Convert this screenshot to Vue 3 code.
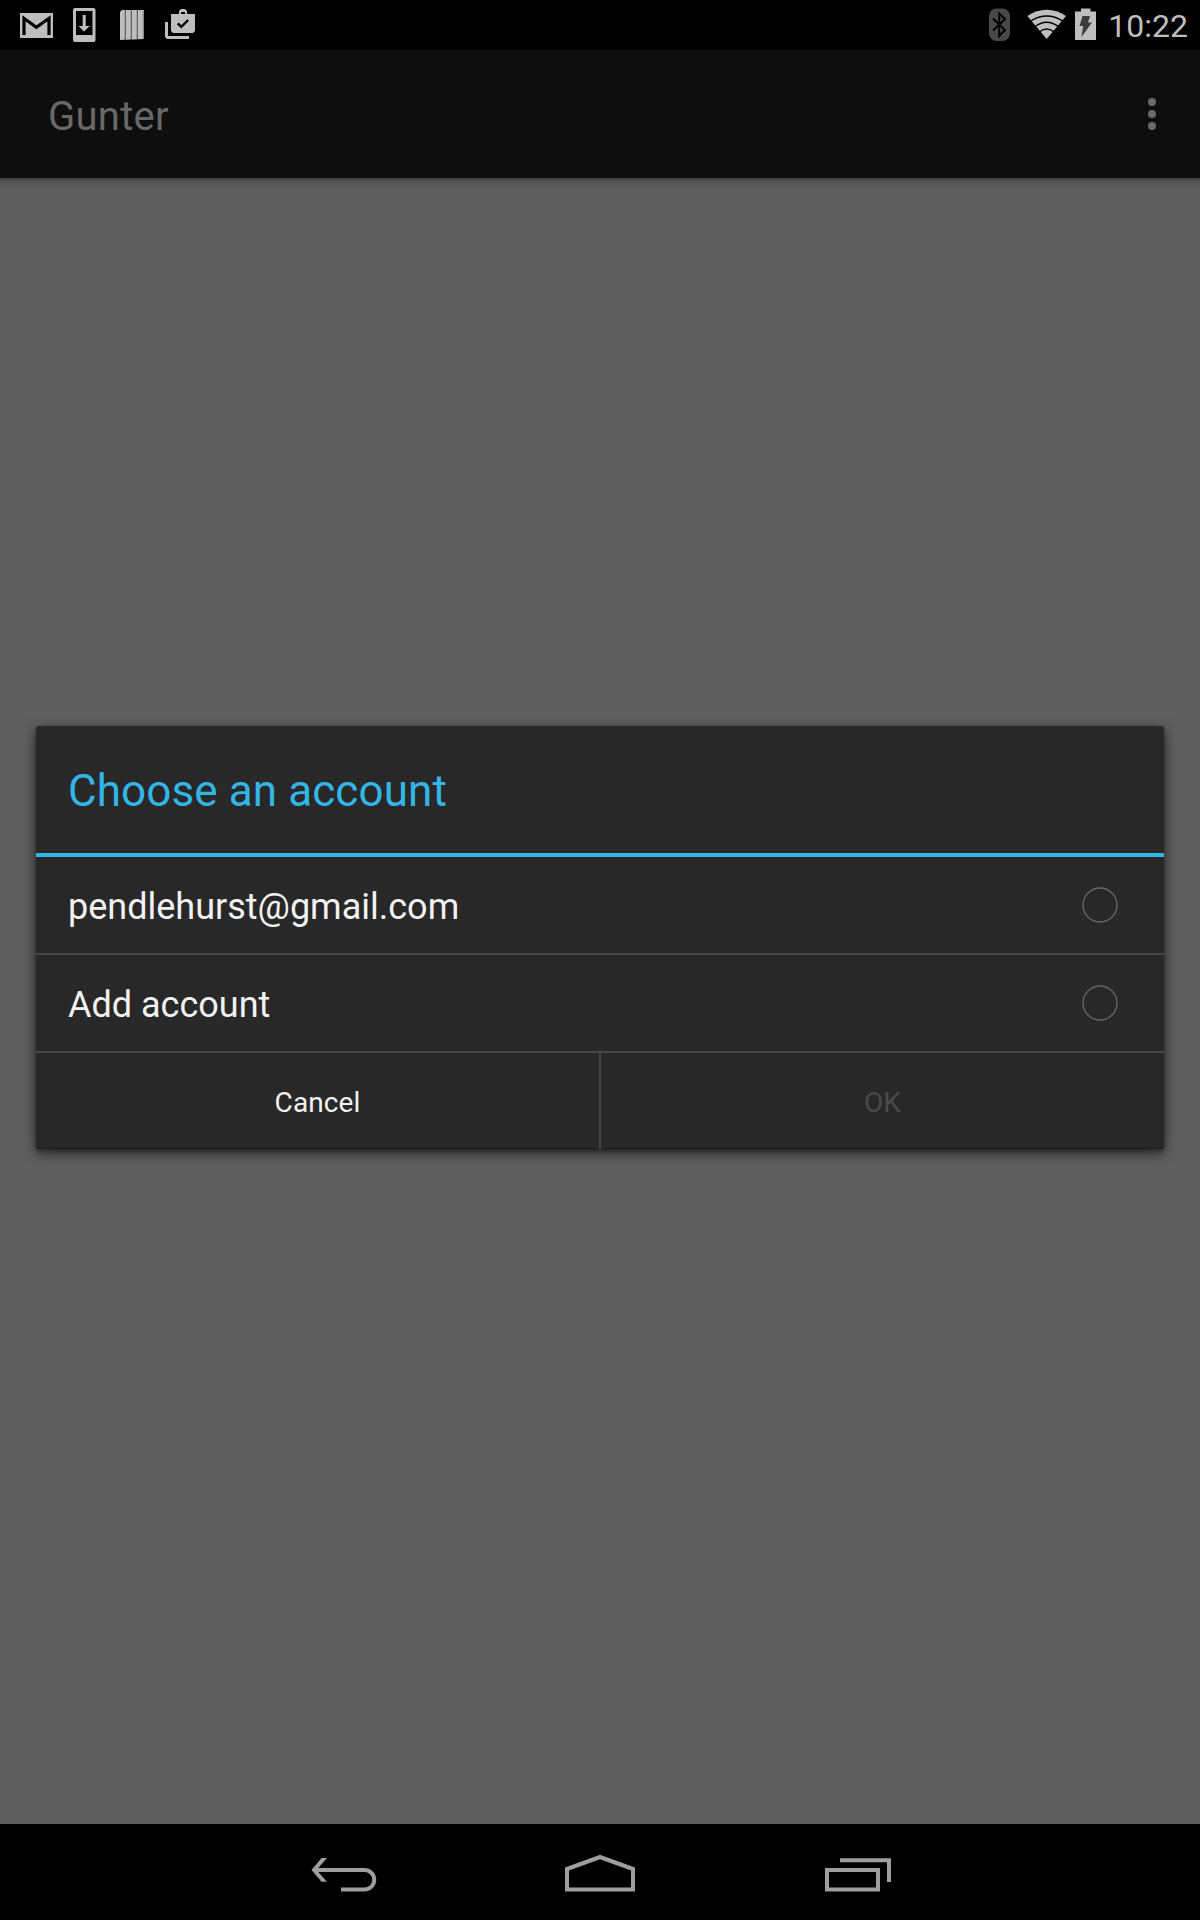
<script setup>
const accounts = ['pendlehurst@gmail.com', 'Add account']
</script>

<template>
  <div class="screen">
    <header class="status">
      <svg class="notifications" width="220" height="50" viewBox="0 0 220 50">
        <g fill="#bebebe">
          <rect x="20" y="13" width="33" height="25" />
          <path d="M75 8h18.500a2 2 0 0 1 2 2v30a2 2 0 0 1-2 2H75a2 2 0 0 1-2-2V10a2 2 0 0 1 2-2z" />
          <path d="M122 10h22v29l-24 1V12z" />
          <path fill-rule="evenodd" d="M171 14h8v-3l2-2h4l2 2v3h8v17l-2 2h-20l-2-2zM181 12v2h4v-2z" />
          <path d="M165 22h3v14h21v3h-22l-2-2z" />
        </g>
        <path d="M24 35V18.300L36.400 27.200 49 18.300V35" fill="none" stroke="#000" stroke-width="3.200" />
        <rect x="76" y="11" width="16.500" height="24" fill="#000" />
        <path d="M82.700 15h3v11h4L84 31.500 78.500 26h4.200z" fill="#bebebe" />
        <path d="M125.300 10v28l-1 2M131.300 10v28l-1 2M137.300 10v28l-1 2" fill="none" stroke="#555" stroke-width="1.100" />
        <path d="M143.200 11v28" stroke="#777" stroke-width="1" />
        <path d="M177.700 23.300l3.600 3.500L188.200 20" fill="none" stroke="#000" stroke-width="2.400" />
      </svg>
      <div class="system">
        <svg width="112" height="50" viewBox="988 0 112 50">
          <rect x="989" y="8.500" width="21" height="32.500" rx="7.500" fill="#484848" />
          <path d="M993 18.500l12 11.500-5.800 6V13.500l5.800 5.500L993 30.500" fill="none" stroke="#000" stroke-width="2" />
          <path d="M1027.300 16Q1046.700 3.500 1066 16L1046.700 39z" fill="#bebebe" />
          <g fill="none" stroke="#000" stroke-width="1.400">
            <path d="M1030.500 21.200Q1046.700 10.800 1063 21.200" />
            <path d="M1034.500 27Q1046.700 17.600 1059 27" />
            <path d="M1038.500 32.600Q1046.700 25.600 1055 32.600" />
          </g>
          <path d="M1081 8.500h9.500v3h5.500V40h-21V11.500h6z" fill="#bebebe" />
          <path d="M1082.500 16h7.500l-2 6.500h4l-10.500 14.500 1.600-11h-3.600z" fill="#3c3c3c" />
        </svg>
        <span class="clock">10:22</span>
      </div>
    </header>

    <div class="appbar">
      <h1>Gunter</h1>
      <div class="overflow"><i></i><i></i><i></i></div>
    </div>

    <main class="content">
      <section class="dialog">
        <h2>Choose an account</h2>
        <div v-for="name in accounts" :key="name" class="row">
          <span>{{ name }}</span>
          <svg width="36" height="36" viewBox="0 0 36 36">
            <circle cx="18" cy="18" r="17" fill="none" stroke="#646464" stroke-width="1.400" />
          </svg>
        </div>
        <div class="actions">
          <button class="cancel">Cancel</button>
          <button class="ok" disabled>OK</button>
        </div>
      </section>
    </main>

    <nav class="nav">
      <svg width="1200" height="96" viewBox="0 1824 1200 96">
        <g fill="none" stroke="#9e9e9e" stroke-width="4">
          <path d="M314 1870h50.500a9.700 9.700 0 0 1 0 19.500H341" />
          <path d="M567 1889.500V1869l33-12 33 12v20.500z" />
          <path d="M827 1870h51v19.500h-51zM840 1860.200h49V1882" />
        </g>
        <path d="M321.500 1858h5.500l-10.500 12 10.500 11.700h-5.500L311.500 1870z" fill="#9e9e9e" />
      </svg>
    </nav>
  </div>
</template>

<style>
body {
  margin: 0;
  background: #000;
}
</style>

<style scoped>
.screen {
  width: 1200px;
  height: 1920px;
  display: flex;
  flex-direction: column;
  background: #000;
  font-family: Roboto, "Liberation Sans", sans-serif;
  overflow: hidden;
}
svg {
  display: block;
  flex: none;
}
.status {
  height: 50px;
  display: flex;
  justify-content: space-between;
}
.system {
  display: flex;
  padding-right: 12px;
}
.clock {
  width: 88px;
  text-align: right;
  font-size: 32px;
  line-height: 52px;
  color: #bebebe;
  white-space: nowrap;
}
.appbar {
  height: 128px;
  flex: none;
  background: #0e0e0e;
  display: flex;
  justify-content: space-between;
  align-items: center;
  padding: 0 44px 0 48px;
  box-sizing: border-box;
}
h1 {
  margin: 5px 0 0;
  font-size: 40px;
  font-weight: 400;
  line-height: 48px;
  letter-spacing: 0.25px;
  color: #686868;
}
.overflow {
  display: flex;
  flex-direction: column;
  gap: 4px;
}
.overflow i {
  width: 8px;
  height: 8px;
  border-radius: 50%;
  background: #6a6a6a;
}
.content {
  height: 1646px;
  box-sizing: border-box;
  padding: 548px 36px 0;
  background: linear-gradient(#3c3c3c, #4c4c4c 2px, #585858 6px, #5f5f5f 12px);
}
.dialog {
  height: 423px;
  background: #282828;
  border-radius: 3px;
  box-shadow: 0 4px 14px rgba(0, 0, 0, 0.6), 0 2px 4px rgba(0, 0, 0, 0.3), inset 0 -1px #1c1c1c;
}
h2 {
  margin: 0;
  height: 131px;
  box-sizing: border-box;
  border-bottom: 4px solid #33b5e5;
  padding: 2px 32px 0;
  font-size: 44px;
  font-weight: 400;
  line-height: 127px;
  letter-spacing: 0.1px;
  color: #33b5e5;
}
.row {
  height: 98px;
  box-sizing: border-box;
  border-bottom: 2px solid #464646;
  padding: 0 46px 0 32px;
  display: flex;
  justify-content: space-between;
  align-items: center;
  font-size: 36px;
  line-height: 42px;
  color: #f2f2f2;
}
.row span {
  padding-top: 4px;
}
.actions {
  height: 96px;
  display: flex;
}
button {
  flex: 1;
  border: 0;
  margin: 0;
  padding: 2px 0 0;
  background: none;
  font: 28px Roboto, "Liberation Sans", sans-serif;
  color: #f2f2f2;
}
.cancel {
  border-right: 2px solid #464646;
  letter-spacing: 0.1px;
}
.ok {
  color: #4a4a4a;
}
.nav {
  height: 96px;
}
</style>
